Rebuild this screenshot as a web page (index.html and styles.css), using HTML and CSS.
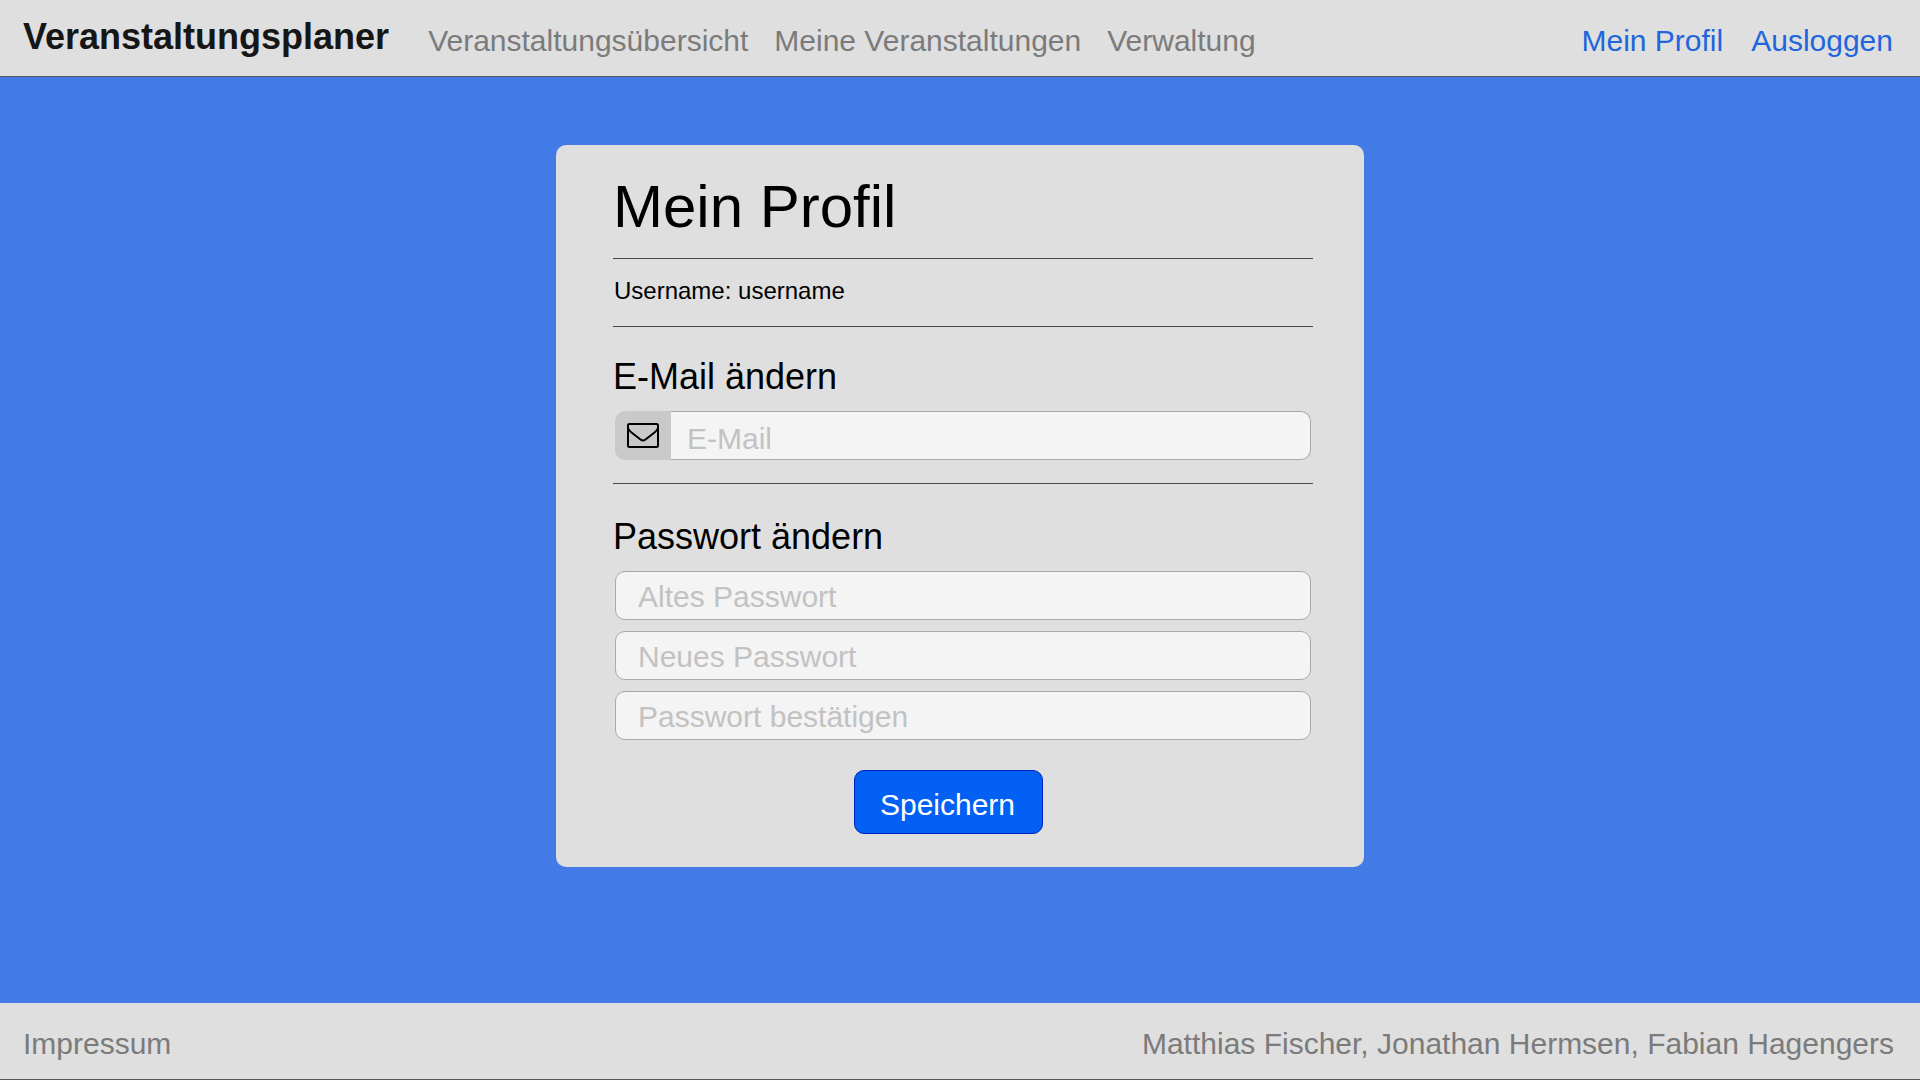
FILE: index.html
```html
<!DOCTYPE html>
<html lang="de">
<head>
  <meta charset="utf-8">
  <meta name="viewport" content="width=device-width, initial-scale=1">
  <title>Mein Profil – Veranstaltungsplaner</title>
  <link rel="stylesheet" href="styles.css">
</head>
<body>
  <header class="bar header">
    <a class="brand" href="#">Veranstaltungsplaner</a>
    <nav class="nav">
      <a href="#">Veranstaltungsübersicht</a>
      <a href="#">Meine Veranstaltungen</a>
      <a href="#">Verwaltung</a>
    </nav>
    <nav class="nav nav-user">
      <a href="#">Mein Profil</a>
      <a href="#">Ausloggen</a>
    </nav>
  </header>

  <main class="main">
    <form class="card">
      <h1 class="title">Mein Profil</h1>
      <hr class="rule">
      <p class="username">Username: username</p>
      <hr class="rule">

      <h2 class="heading">E-Mail ändern</h2>
      <div class="fields">
        <div class="email">
          <label class="email-icon" for="email" aria-label="E-Mail">
            <svg width="32" height="25" viewBox="0 0 32 25" fill="none" stroke="#000" stroke-width="2" stroke-linejoin="round" aria-hidden="true">
              <rect x="1" y="1" width="30" height="23" rx="1.500"/>
              <path d="M1 5Q2 7.500 4.500 9.500L13.500 16.500Q16 18.500 18.500 16.500L27.500 9.500Q30 7.500 31 5"/>
            </svg>
          </label>
          <input class="input input-email" id="email" type="email" placeholder="E-Mail">
        </div>
      </div>
      <hr class="rule">

      <h2 class="heading heading-password">Passwort ändern</h2>
      <div class="fields">
        <input class="input" type="password" placeholder="Altes Passwort" aria-label="Altes Passwort">
        <input class="input" type="password" placeholder="Neues Passwort" aria-label="Neues Passwort">
        <input class="input" type="password" placeholder="Passwort bestätigen" aria-label="Passwort bestätigen">
      </div>
      <div class="actions">
        <button class="save" type="submit">Speichern</button>
      </div>
    </form>
  </main>

  <footer class="bar footer">
    <a href="#">Impressum</a>
    <span>Matthias Fischer, Jonathan Hermsen, Fabian Hagengers</span>
  </footer>
</body>
</html>
```
FILE: styles.css
```css
* {
  box-sizing: border-box;
}

body {
  display: flex;
  flex-direction: column;
  min-height: 100vh;
  margin: 0;
  background: #427be5;
  color: #000;
  font-family: "Liberation Sans", Arial, sans-serif;
  font-size: 30px;
  line-height: 40px;
}

a {
  color: inherit;
  text-decoration: none;
}

.bar {
  display: flex;
  align-items: flex-start;
  padding: 17px 27px 15px 23px;
  border-bottom: 1px solid #58585a;
  background: #dfdfdf;
  color: #7b7b7b;
}

.brand {
  color: #161616;
  font-size: 36px;
  font-weight: bold;
}

.nav {
  display: flex;
  gap: 26px;
  margin-left: 39px;
  padding-top: 4px;
}

.nav-user {
  gap: 28px;
  margin-left: auto;
  color: #2165dd;
}

.main {
  flex: 1;
  padding: 68px 20px;
}

.card {
  max-width: 808px;
  margin: 0 auto;
  padding: 28px 51px 33px 57px;
  border-radius: 10px;
  background: #dfdfdf;
}

.title {
  margin: 0 0 17px;
  font-size: 60px;
  font-weight: normal;
  line-height: 68px;
}

.rule {
  height: 1px;
  margin: 0;
  border: 0;
  background: #484848;
}

.username {
  margin: 18px 0 21px;
  padding-left: 1px;
  font-size: 24px;
  line-height: 28px;
}

.heading {
  margin: 30px 0 14px;
  font-size: 36px;
  font-weight: normal;
}

.heading-password {
  margin-top: 33px;
}

.fields {
  display: flex;
  flex-direction: column;
  gap: 11px;
  padding: 0 2px;
}

.input {
  width: 100%;
  height: 49px;
  padding: 2px 22px 0;
  border: 1px solid #a9a9a9;
  border-radius: 10px;
  background: #f4f4f4;
  color: #000;
  font: inherit;
}

.input::placeholder {
  color: #c2c2c2;
  opacity: 1;
}

.email {
  display: flex;
  margin-bottom: 23px;
}

.email-icon {
  display: flex;
  flex: none;
  align-items: center;
  justify-content: center;
  width: 56px;
  border-radius: 10px 0 0 10px;
  background: #c9c9c9;
}

.input-email {
  flex: 1;
  padding: 6px 16px 0;
  border-left: 0;
  border-radius: 0 10px 10px 0;
}

.actions {
  display: flex;
  justify-content: center;
  margin-top: 30px;
  padding-right: 29px;
}

.save {
  padding: 14px 27px 8px 25px;
  border: 1px solid #0020c0;
  border-radius: 10px;
  background: #0261f4;
  color: #fff;
  font: inherit;
}

.footer {
  justify-content: space-between;
  padding-top: 21px;
  padding-right: 26px;
}
```
